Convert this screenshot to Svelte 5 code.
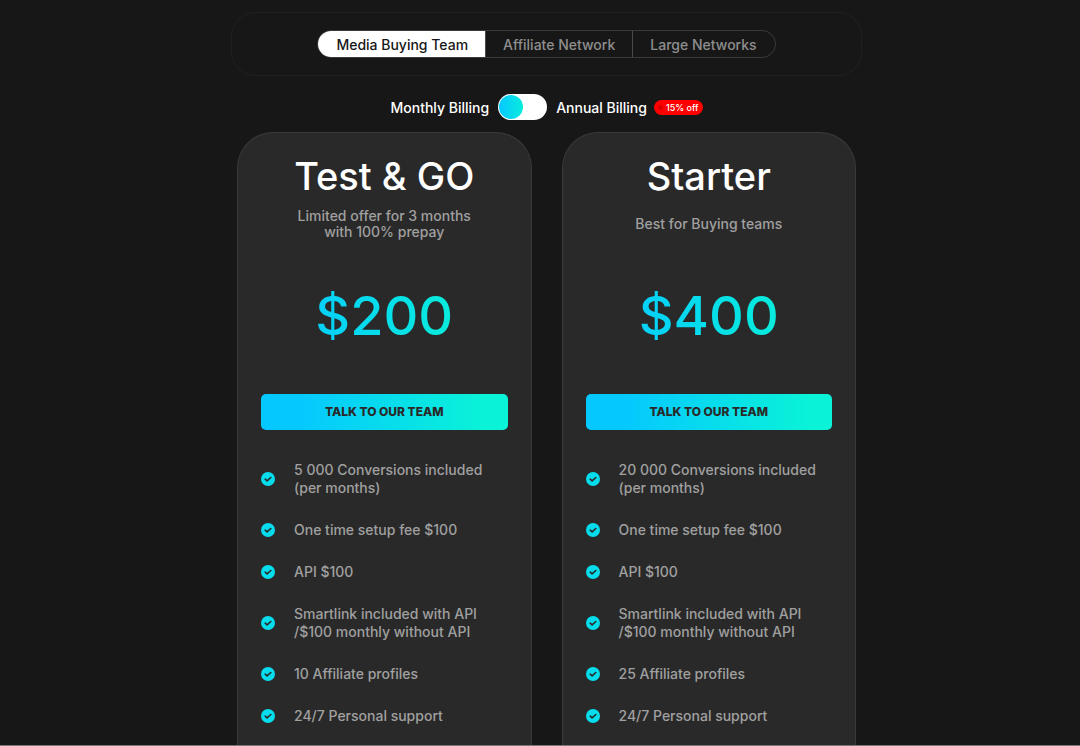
<script lang="ts">
  const audiences = ['Media Buying Team', 'Affiliate Network', 'Large Networks'];

  const plans = [
    {
      name: 'Test & GO',
      note: ['Limited offer for 3 months', 'with 100% prepay'],
      price: '$200',
      features: [
        ['5 000 Conversions included', '(per months)'],
        ['One time setup fee $100'],
        ['API $100'],
        ['Smartlink included with API', '/$100 monthly without API'],
        ['10 Affiliate profiles'],
        ['24/7 Personal support'],
      ],
    },
    {
      name: 'Starter',
      note: ['Best for Buying teams'],
      price: '$400',
      features: [
        ['20 000 Conversions included', '(per months)'],
        ['One time setup fee $100'],
        ['API $100'],
        ['Smartlink included with API', '/$100 monthly without API'],
        ['25 Affiliate profiles'],
        ['24/7 Personal support'],
      ],
    },
  ];

  let audience = $state(audiences[0]);
  let annual = $state(false);
</script>

{#snippet lines(rows: string[])}
  {#each rows as row}<span class="line">{row}</span>{/each}
{/snippet}

<main>
  <div class="panel">
    <div class="tabs">
      {#each audiences as item}
        <button
          class="tab"
          class:active={item === audience}
          aria-pressed={item === audience}
          onclick={() => (audience = item)}>{item}</button
        >
      {/each}
    </div>
  </div>

  <div class="billing">
    <label for="annual">Monthly Billing</label>
    <input id="annual" class="switch" type="checkbox" role="switch" bind:checked={annual} />
    <label for="annual">Annual Billing</label>
    <span class="badge"><i></i>15% off</span>
  </div>

  <div class="plans">
    {#each plans as plan}
      <section class="card">
        <h2>{plan.name}</h2>
        <p class="note"><span>{@render lines(plan.note)}</span></p>
        <p class="price"><span>{plan.price}</span></p>
        <button class="cta">TALK TO OUR TEAM</button>
        <ul>
          {#each plan.features as feature}
            <li>
              <svg viewBox="0 0 14 14" width="14" height="14" aria-hidden="true">
                <circle cx="7" cy="7" r="7" />
                <path d="M4.2 7.2l1.9 1.7 3.7-3.4" />
              </svg>
              <span>{@render lines(feature)}</span>
            </li>
          {/each}
        </ul>
      </section>
    {/each}
  </div>
</main>

<style>
  :global(body) {
    background: #171717;
  }
  main {
    box-sizing: border-box;
    min-height: 100vh;
    display: flex;
    flex-direction: column;
    align-items: center;
    padding: 12px 0 0 13px;
    border-bottom: 1px solid #777;
    font-family: Inter, 'Liberation Sans', sans-serif;
    font-size: 14px;
    font-weight: 500;
    color: #fff;
  }
  button {
    font: inherit;
    cursor: pointer;
  }
  .panel {
    box-sizing: border-box;
    width: 100%;
    max-width: 631px;
    display: flex;
    justify-content: center;
    padding: 17px 16px;
    border: 1px solid #202020;
    border-radius: 24px;
  }
  .tabs {
    display: flex;
    border: 1px solid #3a3a3a;
    border-radius: 14px;
    overflow: hidden;
  }
  .tab {
    height: 26px;
    padding: 0 17px;
    border: none;
    border-left: 1px solid #4a4a4a;
    background: transparent;
    color: #8e8e8e;
  }
  .tab:first-child {
    border-left: none;
    padding-left: 18px;
  }
  .tab:last-child {
    padding-right: 18px;
  }
  .tab.active {
    background: #fff;
    color: #171717;
  }
  .billing {
    display: flex;
    align-items: center;
    margin-top: 18px;
  }
  .switch {
    appearance: none;
    width: 49px;
    height: 26px;
    margin: 0 9px;
    padding: 1px;
    border-radius: 13px;
    background: #fff;
    cursor: pointer;
  }
  .switch::before {
    content: '';
    display: block;
    width: 24px;
    height: 24px;
    border-radius: 50%;
    background: linear-gradient(90deg, #05c8ff, #08ecdc);
  }
  .switch:checked::before {
    margin-left: auto;
  }
  .badge {
    display: flex;
    align-items: center;
    gap: 3px;
    height: 15px;
    margin-left: 7px;
    padding: 0 4px;
    border-radius: 8px;
    background: #fe0000;
    font-size: 9px;
  }
  .badge i {
    width: 5px;
    height: 5px;
    border-radius: 50%;
    background: #d80000;
  }
  .plans {
    flex: 1;
    display: grid;
    grid-template-columns: 1fr 1fr;
    gap: 30px;
    width: 100%;
    max-width: 619px;
    margin-top: 12px;
  }
  .card {
    padding: 20px 23px 0;
    border: 1px solid #3a3a3a;
    border-bottom: none;
    border-radius: 36px 36px 0 0;
    background: #292929;
  }
  h2 {
    margin: 0;
    font-size: 38px;
    line-height: 46px;
    font-weight: 500;
    text-align: center;
  }
  .line {
    display: block;
  }
  .note {
    display: flex;
    align-items: center;
    justify-content: center;
    height: 32px;
    margin: 9px 0 0;
    line-height: 16px;
    text-align: center;
    color: #a0a0a0;
  }
  .price {
    margin: 44px 0 46px;
    font-size: 54px;
    line-height: 64px;
    text-align: center;
  }
  .price span {
    background: linear-gradient(90deg, #05d0f8, #08ecdc);
    background-clip: text;
    -webkit-background-clip: text;
    color: transparent;
  }
  .cta {
    width: 100%;
    height: 36px;
    padding-bottom: 3px;
    border: none;
    border-radius: 5px;
    background: linear-gradient(90deg, #05c8ff 15%, #0af2d8 90%);
    font-size: 12px;
    font-weight: 800;
    color: #292929;
  }
  ul {
    display: grid;
    gap: 24px;
    margin: 31px 0 0;
    padding: 0;
    list-style: none;
    line-height: 18px;
    color: #a0a0a0;
  }
  li {
    display: flex;
    align-items: center;
    gap: 19px;
  }
  li svg {
    flex: none;
  }
  circle {
    fill: #06dcec;
  }
  path {
    fill: none;
    stroke: #292929;
    stroke-width: 1.6;
    stroke-linecap: round;
    stroke-linejoin: round;
  }
</style>
